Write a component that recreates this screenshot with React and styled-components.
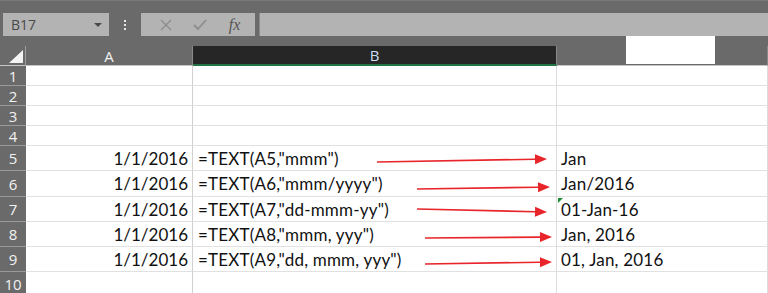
import React from 'react';
import styled, { createGlobalStyle } from 'styled-components';

const Global = createGlobalStyle`
  html, body { margin: 0; padding: 0; background: #fff; }
  body { width: 768px; height: 293px; overflow: hidden; }
`;

const Page = styled.div`
  position: relative;
  width: 768px;
  height: 293px;
  overflow: hidden;
  font-family: Lato, "Open Sans", sans-serif;
`;

const Ribbon = styled.div`
  background: #6a6a6a;
  height: 46px;
  box-sizing: border-box;
  padding: 12px 0 0 3px;
  border-top: 1px solid #7a7a7a;
`;

const FormulaRow = styled.div`
  display: flex;
  align-items: stretch;
  height: 23px;
`;

const NameBox = styled.div`
  width: 106px;
  background: #b3b3b3;
  display: flex;
  align-items: center;
  justify-content: space-between;
  padding: 0 7px 0 8px;
  box-sizing: border-box;
  font-family: "Open Sans", sans-serif;
  font-size: 14px;
  color: #4a4a4a;
`;

const Caret = styled.span`
  width: 0;
  height: 0;
  border-left: 4px solid transparent;
  border-right: 4px solid transparent;
  border-top: 4px solid #4a4a4a;
`;

const Grip = styled.div`
  width: 32px;
  display: flex;
  flex-direction: column;
  align-items: center;
  justify-content: center;
  gap: 2px;
  & span { width: 2px; height: 2px; background: #e6e6e6; }
`;

const FxBox = styled.div`
  width: 114px;
  background: #b3b3b3;
  display: flex;
  align-items: center;
  justify-content: space-around;
  padding: 0 4px 0 8px;
  box-sizing: border-box;
`;

const FxText = styled.span`
  font-family: "Liberation Serif", serif;
  font-style: italic;
  font-size: 16px;
  color: #555;
`;

const FormulaInput = styled.div`
  flex: 1;
  margin-left: 4px;
  background: #b3b3b3;
  border-left: 1px solid #8a8a8a;
`;

const Grid = styled.div`
  display: grid;
  grid-template-columns: 26px 167px 364px 211px;
  grid-template-rows: 20px repeat(4, 20px) 25px 26px 25px 25px 25px 25px;
`;

const Corner = styled.div`
  background: #6a6a6a;
  border-right: 1px solid #9c9c9c;
  border-bottom: 1px solid #c6c6c6;
  box-sizing: border-box;
  position: relative;
  &::after {
    content: '';
    position: absolute;
    right: 2px;
    bottom: 2px;
    border-left: 14px solid transparent;
    border-bottom: 13px solid #f4f4f4;
  }
`;

const ColHead = styled.div`
  background: ${p => (p.$active ? '#262626' : '#6a6a6a')};
  color: ${p => (p.$active ? '#c9def2' : '#f2f2f2')};
  border-bottom: ${p => (p.$active ? '2px solid #217346' : '1px solid #c6c6c6')};
  border-right: 1px solid #8a8a8a;
  box-sizing: border-box;
  display: flex;
  align-items: center;
  justify-content: center;
  font-family: "Open Sans", sans-serif;
  font-size: 15px;
`;

const RowHead = styled.div`
  background: #6a6a6a;
  color: #f2f2f2;
  border-bottom: 1px solid #9a9a9a;
  box-sizing: border-box;
  display: flex;
  align-items: center;
  justify-content: center;
  font-family: "Open Sans", sans-serif;
  font-size: 15px;
`;

const Cell = styled.div`
  position: relative;
  border-right: 1px solid ${p => (p.$col === 'A' ? '#d0d0d0' : '#dcdcdc')};
  border-bottom: 1px solid #e1e1e1;
  box-sizing: border-box;
  display: flex;
  align-items: center;
  justify-content: ${p => (p.$col === 'A' ? 'flex-end' : 'flex-start')};
  padding: 0 4px 0 ${p => (p.$col === 'B' ? '5px' : '4px')};
  font-size: 17px;
  letter-spacing: ${p => (p.$col === 'A' ? '0' : '0.2px')};
  color: #111;
  white-space: nowrap;
`;

const ErrorMark = styled.span`
  position: absolute;
  left: 1px;
  top: 1px;
  border-right: 5px solid transparent;
  border-top: 5px solid #1e8c3a;
`;

const Patch = styled.div`
  position: absolute;
  left: 626px;
  top: 36px;
  width: 89px;
  height: 28px;
  background: #fff;
`;

const Arrows = styled.svg`
  position: absolute;
  left: 0;
  top: 0;
  pointer-events: none;
`;

const rows = [
  { n: 5, a: '1/1/2016', b: '=TEXT(A5,"mmm")', c: 'Jan' },
  { n: 6, a: '1/1/2016', b: '=TEXT(A6,"mmm/yyyy")', c: 'Jan/2016' },
  { n: 7, a: '1/1/2016', b: '=TEXT(A7,"dd-mmm-yy")', c: '01-Jan-16', err: true },
  { n: 8, a: '1/1/2016', b: '=TEXT(A8,"mmm, yyy")', c: 'Jan, 2016' },
  { n: 9, a: '1/1/2016', b: '=TEXT(A9,"dd, mmm, yyy")', c: '01, Jan, 2016' },
  { n: 10, a: '', b: '', c: '' },
];

const arrows = [
  [377, 162, 547, 159],
  [417, 189, 550, 187],
  [417, 209, 547, 212],
  [425, 238, 552, 237],
  [425, 264, 552, 262],
];

const Arrow = ({ x1, y1, x2, y2 }) => {
  const ang = Math.atan2(y2 - y1, x2 - x1);
  const len = 12;
  const w = 5;
  const bx = x2 - len * Math.cos(ang);
  const by = y2 - len * Math.sin(ang);
  const px = -Math.sin(ang) * w;
  const py = Math.cos(ang) * w;
  return (
    <g>
      <line x1={x1} y1={y1} x2={bx} y2={by} stroke="#e8252b" strokeWidth="1.6" />
      <polygon
        points={`${x2},${y2} ${bx + px},${by + py} ${bx - px},${by - py}`}
        fill="#e8252b"
      />
    </g>
  );
};

export default function App() {
  return (
    <Page>
      <Global />
      <Ribbon>
        <FormulaRow>
          <NameBox>
            B17
            <Caret />
          </NameBox>
          <Grip>
            <span />
            <span />
            <span />
          </Grip>
          <FxBox>
            <svg width="12" height="12" viewBox="0 0 12 12">
              <path d="M1 1 L11 11 M11 1 L1 11" stroke="#8d8d8d" strokeWidth="1.4" />
            </svg>
            <svg width="14" height="12" viewBox="0 0 14 12">
              <path d="M1 6 L5 10 L13 1" stroke="#8d8d8d" strokeWidth="1.8" fill="none" />
            </svg>
            <FxText>fx</FxText>
          </FxBox>
          <FormulaInput />
        </FormulaRow>
      </Ribbon>
      <Grid>
        <Corner />
        <ColHead>A</ColHead>
        <ColHead $active>B</ColHead>
        <ColHead />
        {[1, 2, 3, 4].map(n => (
          <React.Fragment key={n}>
            <RowHead>{n}</RowHead>
            <Cell $col="A" />
            <Cell $col="B" />
            <Cell $col="C" />
          </React.Fragment>
        ))}
        {rows.map(r => (
          <React.Fragment key={r.n}>
            <RowHead>{r.n}</RowHead>
            <Cell $col="A">{r.a}</Cell>
            <Cell $col="B">{r.b}</Cell>
            <Cell $col="C">
              {r.err && <ErrorMark />}
              {r.c}
            </Cell>
          </React.Fragment>
        ))}
      </Grid>
      <Patch />
      <Arrows width="768" height="293">
        {arrows.map(([x1, y1, x2, y2], i) => (
          <Arrow key={i} x1={x1} y1={y1} x2={x2} y2={y2} />
        ))}
      </Arrows>
    </Page>
  );
}
